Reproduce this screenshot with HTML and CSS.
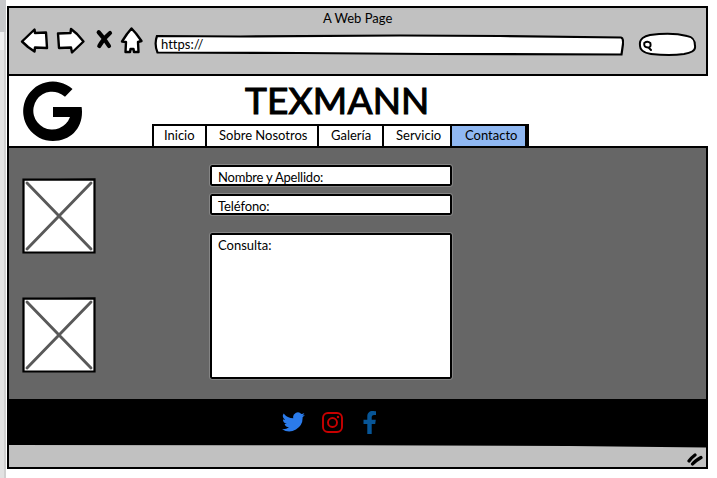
FILE: index.html
```
<!DOCTYPE html>
<html lang="es">
<head>
<meta charset="utf-8">
<title>Texmann</title>
<link rel="stylesheet" href="styles.css">
</head>
<body>
<aside class="gutter"><i class="gutter-top"></i><i class="gutter-light"></i></aside>
<div class="window">
  <div class="chrome">
    <div class="window-title"><span class="t-title">A Web Page</span></div>
    <div class="toolbar">
      <svg class="nav-icons" width="126" height="32" viewBox="20 25 126 32">
        <g fill="#fff" stroke="#000" stroke-width="2.400" stroke-linejoin="round">
          <path d="M22 41.500 34.500 29.500 35 33 46 32.500 46.500 40 47 48 35 47.500 34.500 51.500 28 47Z"/>
          <path d="M58 33.500 70.500 33 71 29 77 34 83.500 41.500 72 52.500 71 47.500 59 48Z"/>
          <path d="M131.500 28.500 136 33.500 141.500 41 138 42 138.500 52 134 52 133.500 49 130.500 49 130 52 125.500 52 126 42 122 41.500 127 34Z"/>
        </g>
        <path d="M98.700 32.300Q104 38 109 46M110 33Q103 39 99.300 46" fill="none" stroke="#000" stroke-width="4.200" stroke-linecap="round"/>
      </svg>
      <div class="address">
        <svg class="outline" width="470" height="22" viewBox="154 34 470 22"><path d="M157 36 240 36.500 400 35.500 500 36 621 37.500Q623.500 38 623 44L621.500 54.500 430 54 300 53 157.500 52.500Q154 44 157 36Z" fill="#fff" stroke="#000" stroke-width="2.200"/></svg>
        <span class="t-url">https:<span class="slashes">//</span></span>
      </div>
      <svg class="search" width="60" height="26" viewBox="638 32 60 26">
        <path d="M650 35Q672 32 687 36C694 37 695 41 695 46C696 51 690 53 684 54Q670 56 651 54C643 53 639.500 49 640 45C639 39 645 36 650 35Z" fill="#fff" stroke="#000" stroke-width="2"/>
        <path d="M644.300 43Q647.500 40.500 650.300 43Q651.500 47.500 648 47.500Q643.500 47.500 644.300 43ZM648.500 47.500 651 50" fill="none" stroke="#000" stroke-width="2" stroke-linecap="round"/>
      </svg>
    </div>
  </div>
  <header class="header">
    <svg class="logo" width="60" height="60" viewBox="0 0 60 60"><path d="M49.500 8 42 15.700A18.900 18.900 0 1 0 47 36H30V26H58.600A29 29 0 0 1 59 31C59 48 47 60 30 60A29.700 29.700 0 1 1 49.500 8Z"/></svg>
    <div class="brand">
      <h1><span class="t-brand">TEXMANN</span></h1>
      <nav class="tabs">
        <a class="tab tab-inicio"><span>Inicio</span></a>
        <a class="tab tab-nosotros"><span>Sobre Nosotros</span></a>
        <a class="tab tab-galeria"><span>Galería</span></a>
        <a class="tab tab-servicio"><span>Servicio</span></a>
        <a class="tab tab-contacto"><span>Contacto</span></a>
      </nav>
    </div>
  </header>
  <main class="content">
    <div class="images">
      <svg class="placeholder" width="74" height="76" viewBox="0 0 74 76"><path d="M1.500 1.700 36 1.700 72.500 1.300V74.500H1.500Z" fill="#fff" stroke="#000" stroke-width="2.200"/><path d="M5 5 69 71M69 5 5 71" stroke="#595959" stroke-width="2.900" stroke-linecap="round"/></svg>
      <svg class="placeholder" width="74" height="76" viewBox="0 0 74 76"><path d="M1.500 1.700 36 1.700 72.500 1.300V74.500H1.500Z" fill="#fff" stroke="#000" stroke-width="2.200"/><path d="M5 5 69 71M69 5 5 71" stroke="#595959" stroke-width="2.900" stroke-linecap="round"/></svg>
    </div>
    <form class="form">
      <label class="field"><span class="t-nombre">Nombre y Apellido:</span></label>
      <label class="field"><span class="t-telefono">Teléfono:</span></label>
      <label class="field area"><span>Consulta:</span></label>
    </form>
  </main>
  <footer class="social">
    <svg width="23" height="20" viewBox="0 0 24 20"><path fill="#2b7bea" d="M24 2.400a10 10 0 0 1-2.800.8A5 5 0 0 0 23.300.5a10 10 0 0 1-3.100 1.200A4.900 4.900 0 0 0 11.800 6.200 14 14 0 0 1 1.700 1a4.900 4.900 0 0 0 1.500 6.600A5 5 0 0 1 1 7a4.900 4.900 0 0 0 3.900 4.900 5 5 0 0 1-2.200.1 4.900 4.900 0 0 0 4.600 3.400A9.900 9.900 0 0 1 0 17.500 14 14 0 0 0 21.500 5a10 10 0 0 0 2.500-2.600Z"/></svg>
    <svg width="21" height="21" viewBox="0 0 21 21"><g fill="none" stroke="#c80000" stroke-width="1.900"><rect x="1" y="1" width="19" height="19" rx="5"/><circle cx="10.500" cy="10.500" r="4.500"/></g><circle cx="16" cy="5" r="1.250" fill="#c80000"/></svg>
    <svg width="14" height="23" viewBox="0 0 14 23"><path fill="#075596" d="M4.300 23V13H.5V8.800H4.300V5.500C4.300 1.900 6.400 0 9.700 0C11.200 0 13 .3 13 .3V3.900H11.100C9.300 3.900 8.700 5 8.700 6.200V8.800H12.800L12.200 13H8.700V23Z"/></svg>
  </footer>
  <div class="statusbar">
    <svg class="seam" width="697" height="4" viewBox="0 0 697 4"><path d="M0 0H697V2.500L560 1 350 .3 0 .1Z"/></svg>
    <svg class="grip" width="18" height="15" viewBox="0 0 18 15"><path d="M2 9Q4 6 8 3M5.500 12Q8 9 14 5.500" fill="none" stroke="#000" stroke-width="3.200" stroke-linecap="round"/></svg>
  </div>
</div>
</body>
</html>
```
FILE: styles.css
```
* { box-sizing: border-box; }
body { margin: 0; width: 717px; height: 478px; overflow: hidden; display: flex; background: #fff; color: #000; font: 13px/16px Lato, "Liberation Sans", sans-serif; font-variant-ligatures: none; }
span { white-space: nowrap; }
svg { display: block; flex: none; }

.gutter { width: 7px; flex: none; border-right: 1px solid #fff; background: linear-gradient(90deg, #e2e2e2 4px, #d0d0d0 4px); }
.gutter i { display: block; }
.gutter-top { height: 32px; background: #c7c8ca; }
.gutter-light { height: 18px; width: 4px; background: #f0f0f0; }

.window { width: 701px; height: 463px; margin-top: 6px; border: 2px solid #000; display: flex; flex-direction: column; flex: none; }
.chrome { height: 66px; background: #c1c1c1; }
.window-title { height: 17px; padding: 2px 0 0 314px; }
.toolbar { display: flex; height: 49px; padding-left: 11px; }
.nav-icons { width: 126px; height: 32px; }
.address { position: relative; width: 470px; height: 22px; margin: 9px 0 0 8px; padding: 2px 0 0 7px; }
.outline { position: absolute; inset: 0; }
.address span { position: relative; }
.search { margin: 7px 0 0 14px; }

.header { height: 74px; border-top: 2px solid #000; border-bottom: 2px solid #000; background: #fff; display: flex; padding-left: 14px; width: 699px; flex: none; }
.logo { margin-top: 5px; }
.brand { margin-left: 69px; }
h1 { margin: 0; height: 48px; padding: 3px 0 0 93px; font-size: 37px; line-height: 42px; font-weight: 400; -webkit-text-stroke: 1.1px #000; }
.tabs { display: flex; width: 377px; height: 24px; border: 2px solid #000; border-right-width: 4px; }
.tab { padding-top: 1px; border-right: 2px solid #000; flex: none; }
.tab-inicio { width: 53px; padding-left: 10px; }
.tab-nosotros { width: 112px; padding-left: 12px; }
.tab-galeria { width: 65px; padding-left: 12px; }
.tab-servicio { width: 68px; padding-left: 12px; }
.tab-contacto { width: 73px; padding-left: 13px; background: #90b8f2; border: 0; }

.content { height: 251px; flex: none; display: flex; background: #666; }
.images { width: 74px; margin-left: 13px; padding-top: 30px; display: flex; flex-direction: column; gap: 43px; }
.form { width: 242px; margin-left: 114px; padding-top: 17px; display: flex; flex-direction: column; gap: 8px; }
.field { height: 21px; background: #fff; border: 2px solid #000; border-radius: 2px; padding: 2px 0 0 6px; display: block; outline: 1px solid #858585; outline-offset: -.5px; }
.area { height: 146px; margin-top: 10px; }

.social { height: 46px; flex: none; background: #000; display: flex; align-items: center; padding-left: 273px; }
.social svg:nth-child(2) { margin-left: 17px; }
.social svg:nth-child(3) { margin-left: 20px; }
.statusbar { flex: 1; background: #c1c1c1; }
.grip { margin: 3px 0 0 678px; }

.slashes { letter-spacing: .8px; }
.t-brand { letter-spacing: .2px; }
.t-nombre { letter-spacing: -.2px; }
.t-telefono { letter-spacing: -.1px; }
```
